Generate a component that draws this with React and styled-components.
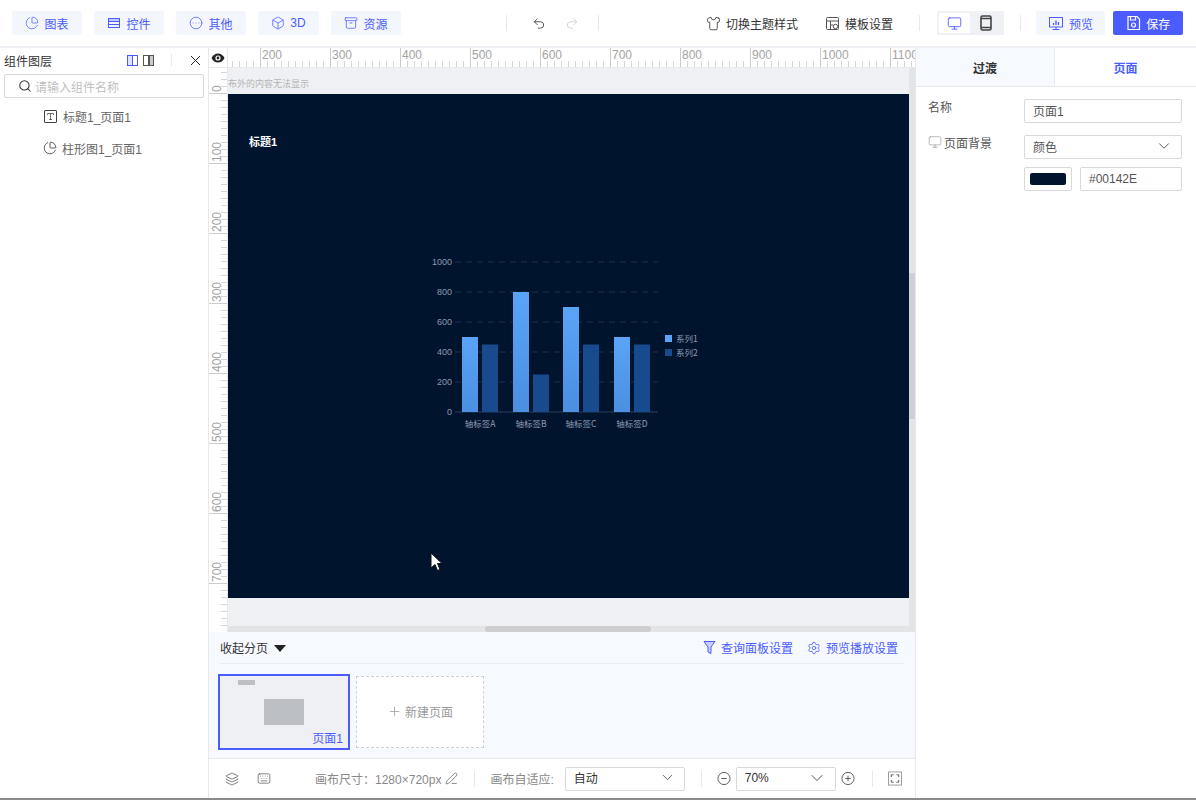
import React from 'react';
import styled, { createGlobalStyle } from 'styled-components';
import {
  PieChart, CircleEllipsis, Box, Archive, Undo2, Redo2, Shirt, Monitor,
  Search, X, Settings, ChevronDown, Plus, Layers, Keyboard, PenLine, Type,
} from 'lucide-react';

const BLUE = '#4b5cff';

const GlobalStyle = createGlobalStyle`
  html, body { margin: 0; padding: 0; background: #fff; }
  * { box-sizing: border-box; }
  body { font-family: "Liberation Sans", "Noto Sans CJK SC", sans-serif; font-size: 12px; color: #333; }
`;

const Page = styled.div`
  width: 1196px;
  height: 800px;
  display: flex;
  flex-direction: column;
  overflow: hidden;
  border-bottom: 2px solid #8a8a8a;
`;

const TopBar = styled.header`
  height: 48px;
  flex: none;
  display: flex;
  align-items: center;
  padding: 0 13px 0 12px;
  border-bottom: 2px solid #eceef1;
`;

const ToolGroup = styled.div`
  display: flex;
  gap: 12px;
`;

const ToolButton = styled.div`
  width: ${p => p.$w || 70}px;
  height: 24px;
  display: flex;
  align-items: center;
  justify-content: center;
  gap: 5px;
  background: #f4f6fe;
  color: ${BLUE};
  border-radius: 2px;
`;

const Sep = styled.i`
  width: 1px;
  height: ${p => p.$h || 16}px;
  background: #e6e8ec;
  flex: none;
  margin: ${p => p.$m || '0'};
`;

const PlainAction = styled.div`
  display: flex;
  align-items: center;
  gap: 5px;
  color: #333;
  white-space: nowrap;
  width: ${p => p.$w}px;
  flex: none;
`;

const DeviceToggle = styled.div`
  width: 67px;
  height: 24px;
  margin-left: 17px;
  display: flex;
  padding: 2px;
  background: #eff1f5;
`;

const DeviceItem = styled.div`
  flex: 1;
  display: flex;
  align-items: center;
  justify-content: center;
  background: ${p => (p.$active ? '#fff' : 'transparent')};
  color: ${p => (p.$active ? BLUE : '#444')};
`;

const SaveButton = styled(ToolButton)`
  background: ${BLUE};
  color: #fff;
  margin-left: 8px;
`;

const Main = styled.div`
  flex: 1;
  min-height: 0;
  display: flex;
`;

const LeftPanel = styled.aside`
  width: 208px;
  flex: none;
  padding: 0 4px;
`;

const LayerHead = styled.div`
  height: 26px;
  padding-bottom: 2px;
  display: flex;
  align-items: center;
  font-size: 12px;
  color: #333;
`;

const LayerTitle = styled.span`
  flex: 1;
`;

const DockIcon = styled.span`
  width: 11px;
  height: 11px;
  display: block;
  margin-right: 5px;
  border: 1.5px solid ${p => (p.$active ? BLUE : '#555')};
  background: ${p => (p.$active ? 'linear-gradient(90deg, #dfe2ff 40%, #4b5cff 40%, #4b5cff 58%, transparent 58%)' : 'linear-gradient(90deg, transparent 50%, #555 50%, #555 68%, #ccc 68%)')};
`;

const CloseWrap = styled.span`
  display: flex;
  margin: 0 0 0 15px;
  color: #222;
`;

const SearchBox = styled.div`
  height: 24px;
  display: flex;
  align-items: center;
  gap: 3px;
  padding-left: 13px;
  border: 1px solid #d9d9d9;
  border-radius: 2px;
  color: #bfbfbf;
  margin-bottom: 2px;
`;

const LayerRow = styled.div`
  height: 32px;
  display: flex;
  align-items: center;
  gap: 5px;
  padding-left: 39px;
  color: #666;
`;

const TypeBadge = styled.span`
  width: 13px;
  height: 13px;
  margin: 0 1px;
  border: 1px solid #444;
  border-radius: 1px;
  display: flex;
  align-items: center;
  justify-content: center;
  color: #444;
`;

const Center = styled.section`
  width: 707px;
  flex: none;
  display: flex;
  flex-direction: column;
  border-left: 1px solid #e6e8ec;
`;

const RulerTop = styled.div`
  height: 20px;
  flex: none;
  display: flex;
  overflow: hidden;
`;

const RulerCorner = styled.div`
  width: 19px;
  flex: none;
  display: flex;
  align-items: center;
  justify-content: center;
  border-right: 1px solid #e6e8ec;
  border-bottom: 1px solid #e6e8ec;
`;

const RulerH = styled.div`
  flex: 1;
  display: flex;
  overflow: hidden;
  padding-left: 32px;
  border-bottom: 1px solid #e6e8ec;
  background:
    repeating-linear-gradient(90deg, #d4d6da 0 1px, transparent 1px 7px) 4px 100% / 100% 6px no-repeat;
`;

const RulerHCell = styled.div`
  width: 70px;
  flex: none;
  height: 19px;
  border-left: 1px solid #ccc;
  padding-left: 1px;
  font-size: 12px;
  line-height: 14px;
  color: #a3a3a3;
  font-family: "Liberation Sans", sans-serif;
`;

const Workspace = styled.div`
  flex: 1;
  min-height: 0;
  display: flex;
`;

const RulerV = styled.div`
  width: 19px;
  flex: none;
  display: flex;
  flex-direction: column;
  overflow: hidden;
  padding-top: 25px;
  border-right: 1px solid #e6e8ec;
  background:
    repeating-linear-gradient(180deg, #d4d6da 0 1px, transparent 1px 7px) 100% 4px / 6px 100% no-repeat;
`;

const RulerVCell = styled.div`
  height: 70px;
  flex: none;
  width: 19px;
  border-top: 1px solid #ccc;
  position: relative;
`;

const RulerVLabel = styled.span`
  position: absolute;
  left: 1px;
  top: -2px;
  transform: rotate(-90deg);
  transform-origin: 0 0;
  font-size: 12px;
  line-height: 14px;
  color: #a3a3a3;
  white-space: nowrap;
`;

const StageColumn = styled.div`
  flex: 1;
  min-width: 0;
  min-height: 0;
  display: flex;
  flex-direction: column;
`;

const StageRow = styled.div`
  flex: 1;
  min-height: 0;
  display: flex;
`;

const Stage = styled.div`
  flex: 1;
  min-width: 0;
  background: #eef0f4;
  display: flex;
  flex-direction: column;
`;

const StageHint = styled.div`
  height: 26px;
  flex: none;
  font-size: 9px;
  line-height: 32px;
  color: #b4b4b4;
  white-space: nowrap;
  overflow: hidden;
`;

const Canvas = styled.div`
  height: 504px;
  flex: none;
  background: #00142e;
  position: relative;
  display: flex;
  align-items: flex-start;
  padding: 41px 21px 0;
`;

const CanvasTitle = styled.div`
  color: #fff;
  font-size: 11px;
  font-weight: 700;
  line-height: 14px;
`;

const ChartWrap = styled.div`
  position: absolute;
  left: 200px;
  top: 156px;
  width: 280px;
  height: 184px;
`;

const CursorWrap = styled.div`
  position: absolute;
  left: 202px;
  top: 458px;
  width: 14px;
  height: 20px;
`;

const ScrollV = styled.div`
  width: 6px;
  flex: none;
  background: #e3e4e6;
  display: flex;
  flex-direction: column;
  padding-top: 205px;
`;

const ScrollVThumb = styled.div`
  height: 146px;
  background: #cdd0d6;
`;

const ScrollH = styled.div`
  height: 6px;
  flex: none;
  background: #e3e4e6;
  padding-left: 257px;
`;

const ScrollHThumb = styled.div`
  width: 166px;
  height: 6px;
  background: #cdcdcf;
  border-radius: 3px;
`;

const Pager = styled.div`
  height: 127px;
  flex: none;
  background: #f6f9fe;
  padding: 0 11px;
  border-bottom: 1px solid #e6e8ec;
`;

const PagerHead = styled.div`
  height: 32px;
  display: flex;
  align-items: center;
  padding-right: 6px;
  border-bottom: 1px solid #e9edf3;
  margin-bottom: 10px;
`;

const Collapse = styled.div`
  flex: 1;
  display: flex;
  align-items: center;
  gap: 6px;
  color: #333;
`;

const Caret = styled.i`
  width: 0;
  height: 0;
  border-left: 6px solid transparent;
  border-right: 6px solid transparent;
  border-top: 7px solid #222;
  margin-top: 1px;
`;

const PagerLink = styled.div`
  display: flex;
  align-items: center;
  gap: 5px;
  color: ${BLUE};
  margin-left: 14px;
`;

const Thumbs = styled.div`
  display: flex;
  gap: 6px;
  margin-left: -2px;
`;

const ThumbCard = styled.div`
  width: 132px;
  height: 76px;
  border: 2px solid ${BLUE};
  background: #eef0f4;
  position: relative;
`;

const ThumbMini = styled.i`
  position: absolute;
  left: ${p => p.$x}px;
  top: ${p => p.$y}px;
  width: ${p => p.$w}px;
  height: ${p => p.$h}px;
  background: #bcbfc3;
`;

const ThumbName = styled.span`
  position: absolute;
  right: 5px;
  bottom: 1px;
  color: ${BLUE};
  line-height: 16px;
`;

const NewPage = styled.div`
  width: 128px;
  height: 72px;
  margin-top: 2px;
  padding-bottom: 2px;
  border: 1px dashed #d0d2d6;
  background: #fff;
  display: flex;
  align-items: center;
  justify-content: center;
  gap: 3px;
  color: #999;
`;

const BottomBar = styled.div`
  height: 39px;
  flex: none;
  display: flex;
  align-items: center;
  padding-left: 16px;
  color: #888;
  white-space: nowrap;
`;

const BarIcon = styled.span`
  display: flex;
  width: 14px;
  margin-right: ${p => p.$mr || 0}px;
  margin-left: ${p => p.$ml || 0}px;
  color: ${p => p.$c || '#555'};
`;

const FieldBox = styled.div`
  width: ${p => p.$w || 158}px;
  height: 24px;
  flex: none;
  display: flex;
  align-items: center;
  justify-content: space-between;
  padding: 0 8px 1px;
  margin-left: ${p => p.$ml || 0}px;
  background: #fff;
  border: 1px solid #d9d9d9;
  border-radius: 2px;
  color: ${p => p.$c || '#555'};
`;

const ChevronField = styled(FieldBox)`
  padding-bottom: 2px;
`;

const RightPanel = styled.aside`
  flex: 1;
  min-width: 0;
  border-left: 1px solid #e6e8ec;
`;

const Tabs = styled.div`
  height: 39px;
  display: flex;
  border-bottom: 1px solid #e6e8ec;
`;

const Tab = styled.div`
  width: ${p => p.$w}px;
  display: flex;
  align-items: center;
  justify-content: center;
  font-weight: 700;
  background: ${p => (p.$active ? '#fff' : '#f6f9fe')};
  color: ${p => (p.$active ? BLUE : '#333')};
  border-right: ${p => (p.$active ? 'none' : '1px solid #e6e8ec')};
`;

const Form = styled.div`
  padding: 12px 14px 0 12px;
  display: flex;
  flex-direction: column;
  gap: 12px;
`;

const FormRow = styled.div`
  display: flex;
  align-items: flex-start;
`;

const SwatchRow = styled(FormRow)`
  margin-top: -4px;
  padding-left: 96px;
`;

const FormLabel = styled.div`
  width: 96px;
  flex: none;
  height: 14px;
  display: flex;
  align-items: center;
  gap: 2px;
  color: #555;
`;

const Swatch = styled.div`
  width: 48px;
  height: 24px;
  padding: 5px;
  background: #fff;
  border: 1px solid #d9d9d9;
  border-radius: 2px;
  margin-right: 8px;
  &::after {
    content: "";
    display: block;
    height: 100%;
    background: #00142e;
    border-radius: 2px;
  }
`;

const ControlIcon = () => (
  <svg width="14" height="14" viewBox="0 0 14 14" fill="none" stroke="currentColor">
    <rect x="1.5" y="2.5" width="11" height="9" />
    <rect x="1.5" y="2.5" width="11" height="3" fill="currentColor" fillOpacity=".3" />
    <path d="M1.5 8.5h11" />
  </svg>
);

const TemplateIcon = () => (
  <svg width="15" height="15" viewBox="0 0 15 15" fill="none" stroke="#555">
    <rect x="1.5" y="1.5" width="12" height="12" rx="1" />
    <path d="M1.5 5h12M5.5 5v8.500M5.500 9h3" />
    <circle cx="10.500" cy="10.500" r="2.200" fill="#fff" />
  </svg>
);

const PhoneIcon = () => (
  <svg width="14" height="16" viewBox="0 0 14 16" fill="none" stroke="#444" strokeWidth="1.6">
    <rect x="2" y="1" width="10" height="14" rx="1.500" />
    <path d="M2 3.500h10M2 12.500h10" />
  </svg>
);

const PreviewIcon = () => (
  <svg width="16" height="15" viewBox="0 0 16 15" fill="none" stroke="currentColor">
    <rect x="1.500" y="1.500" width="13" height="9.500" />
    <path d="M8 11v2.500M4.500 13.500h7" />
    <path d="M5.500 9V7M8 9V4.500M10.500 9V6" strokeWidth="1.300" />
  </svg>
);

const SaveIcon = () => (
  <svg width="15" height="16" viewBox="0 0 15 16" fill="none" stroke="#fff" strokeWidth="1.200">
    <path d="M2 1.500h9l2.500 2.500v10.500H2z" />
    <path d="M4.500 1.500v3.500h5V1.500" />
    <circle cx="7.500" cy="10" r="2" />
  </svg>
);

const EyeIcon = () => (
  <svg width="14" height="10" viewBox="0 0 14 10">
    <path d="M0.500 5C2 2 4.300 0.500 7 0.500S12 2 13.500 5C12 8 9.700 9.500 7 9.500S2 8 0.500 5z" fill="#222" />
    <circle cx="7" cy="5" r="2.600" fill="#fff" />
    <circle cx="7" cy="5" r="1.400" fill="#222" />
  </svg>
);

const FunnelIcon = () => (
  <svg width="13" height="15" viewBox="0 0 13 15" fill="none" stroke={BLUE}>
    <path d="M1 1.500h11L8 7v6.500L5 12V7z" fill={BLUE} fillOpacity=".25" />
  </svg>
);

const FitIcon = () => (
  <svg width="15" height="15" viewBox="0 0 15 15" fill="none" stroke="#555">
    <rect x="0.500" y="0.500" width="14" height="14" stroke="#999" />
    <path d="M3.500 6V3.500H6M9 3.500h2.500V6M11.500 9v2.500H9M6 11.500H3.500V9" />
  </svg>
);

const ZoomIcon = ({ plus }) => (
  <svg width="15" height="15" viewBox="0 0 15 15" fill="none" stroke="#555">
    <circle cx="7.500" cy="7.500" r="6.500" />
    <path d={plus ? 'M4.500 7.500h6M7.500 4.500v6' : 'M4.500 7.500h6'} />
  </svg>
);

const TOOLS = [
  { name: '图表', icon: <PieChart size={14} strokeWidth={1.3} /> },
  { name: '控件', icon: <ControlIcon /> },
  { name: '其他', icon: <CircleEllipsis size={14} strokeWidth={1.3} /> },
  { name: '3D', icon: <Box size={14} strokeWidth={1.3} />, w: 61 },
  { name: '资源', icon: <Archive size={14} strokeWidth={1.3} /> },
];

const TICKS_H = [200, 300, 400, 500, 600, 700, 800, 900, 1000, 1100];
const TICKS_V = [0, 100, 200, 300, 400, 500, 600, 700];

const BARS = [
  [500, 450],
  [800, 250],
  [700, 450],
  [500, 450],
];
const AXIS = ['轴标签A', '轴标签B', '轴标签C', '轴标签D'];

// chart coordinates: y 0 at 162, 1000 at 12
const yOf = v => 162 - v * 0.15;

const BarChart = () => (
  <svg width="280" height="184" viewBox="0 0 280 184">
    <defs>
      <linearGradient id="s1" x1="0" y1="0" x2="0" y2="1">
        <stop offset="0" stopColor="#5aa4f7" />
        <stop offset="1" stopColor="#4a8fe0" />
      </linearGradient>
    </defs>
    {[1000, 800, 600, 400, 200].map(v => (
      <line key={v} x1="27" x2="230" y1={yOf(v)} y2={yOf(v)} stroke="#1f3049" strokeDasharray="6 5" />
    ))}
    <line x1="27" x2="230" y1="162" y2="162" stroke="#2a3f5e" />
    {[0, 200, 400, 600, 800, 1000].map(v => (
      <text key={v} x="24" y={yOf(v) + 3} textAnchor="end" fontSize="9" fill="#8d9bb0" fontFamily="Liberation Sans">{v}</text>
    ))}
    {BARS.map(([a, b], i) => {
      const x = 34 + [0, 51, 101, 152][i];
      return (
        <g key={i}>
          <rect x={x} y={yOf(a)} width="16" height={162 - yOf(a)} fill="url(#s1)" />
          <rect x={x + 20} y={yOf(b)} width="16" height={162 - yOf(b)} fill="#184a8e" />
          <text x={x + 18} y="177" textAnchor="middle" fontSize="8.5" fill="#8d9bb0" fontFamily="Noto Sans CJK SC">{AXIS[i]}</text>
        </g>
      );
    })}
    <rect x="237" y="85" width="7" height="7" fill="#5aa4f7" />
    <text x="248" y="92" fontSize="8.5" fill="#8d9bb0" fontFamily="Noto Sans CJK SC">系列1</text>
    <rect x="237" y="99" width="7" height="7" fill="#184a8e" />
    <text x="248" y="106" fontSize="8.5" fill="#8d9bb0" fontFamily="Noto Sans CJK SC">系列2</text>
  </svg>
);

const App = () => (
  <Page>
    <GlobalStyle />
    <TopBar>
      <ToolGroup>
        {TOOLS.map(({ name, icon, w }) => (
          <ToolButton key={name} $w={w}>
            {icon}
            {name}
          </ToolButton>
        ))}
      </ToolGroup>
      <Sep $m="0 25px 0 105px" />
      <BarIcon $mr={19} $c="#333"><Undo2 size={15} strokeWidth={1.4} /></BarIcon>
      <BarIcon $c="#ccc"><Redo2 size={15} strokeWidth={1.4} /></BarIcon>
      <Sep $m="0 107px 0 19px" />
      <PlainAction $w={119}><Shirt size={15} strokeWidth={1.3} />切换主题样式</PlainAction>
      <PlainAction $w={94}><TemplateIcon />模板设置</PlainAction>
      <Sep />
      <DeviceToggle>
        <DeviceItem $active><Monitor size={15} strokeWidth={1.4} /></DeviceItem>
        <DeviceItem><PhoneIcon /></DeviceItem>
      </DeviceToggle>
      <Sep $m="0 15px 0 16px" />
      <ToolButton><PreviewIcon />预览</ToolButton>
      <SaveButton><SaveIcon />保存</SaveButton>
    </TopBar>
    <Main>
      <LeftPanel>
        <LayerHead>
          <LayerTitle>组件图层</LayerTitle>
          <DockIcon $active />
          <DockIcon />
          <Sep $h={12} $m="0 0 0 12px" />
          <CloseWrap><X size={17} strokeWidth={1.4} /></CloseWrap>
        </LayerHead>
        <SearchBox>
          <Search size={14} color="#333" strokeWidth={1.8} />
          请输入组件名称
        </SearchBox>
        <LayerRow>
          <TypeBadge><Type size={9} strokeWidth={2} /></TypeBadge>
          标题1_页面1
        </LayerRow>
        <LayerRow>
          <PieChart size={14} color="#444" strokeWidth={1.5} />
          柱形图1_页面1
        </LayerRow>
      </LeftPanel>
      <Center>
        <RulerTop>
          <RulerCorner><EyeIcon /></RulerCorner>
          <RulerH>
            {TICKS_H.map(t => <RulerHCell key={t}>{t}</RulerHCell>)}
          </RulerH>
        </RulerTop>
        <Workspace>
          <RulerV>
            {TICKS_V.map(t => (
              <RulerVCell key={t}><RulerVLabel>{t}</RulerVLabel></RulerVCell>
            ))}
          </RulerV>
          <StageColumn>
            <StageRow>
              <Stage>
                <StageHint>布外的内容无法显示</StageHint>
                <Canvas>
                  <CanvasTitle>标题1</CanvasTitle>
                  <ChartWrap><BarChart /></ChartWrap>
                  <CursorWrap>
                    <svg width="14" height="20" viewBox="0 0 14 20">
                      <path d="M1 1v15l4-3.500 2.500 6 2.500-1-2.500-6H12z" fill="#fff" stroke="#111" strokeWidth="1" />
                    </svg>
                  </CursorWrap>
                </Canvas>
              </Stage>
              <ScrollV><ScrollVThumb /></ScrollV>
            </StageRow>
            <ScrollH><ScrollHThumb /></ScrollH>
          </StageColumn>
        </Workspace>
        <Pager>
          <PagerHead>
            <Collapse>收起分页<Caret /></Collapse>
            <PagerLink><FunnelIcon />查询面板设置</PagerLink>
            <PagerLink><Settings size={14} strokeWidth={1.4} />预览播放设置</PagerLink>
          </PagerHead>
          <Thumbs>
            <ThumbCard>
              <ThumbMini $x={18} $y={4} $w={17} $h={5} />
              <ThumbMini $x={44} $y={23} $w={40} $h={26} />
              <ThumbName>页面1</ThumbName>
            </ThumbCard>
            <NewPage><Plus size={15} strokeWidth={1.2} />新建页面</NewPage>
          </Thumbs>
        </Pager>
        <BottomBar>
          <BarIcon $mr={18}><Layers size={14} strokeWidth={1.3} /></BarIcon>
          <BarIcon $mr={44}><Keyboard size={15} strokeWidth={1.2} /></BarIcon>
          画布尺寸：1280×720px
          <BarIcon $ml={4}><PenLine size={13} strokeWidth={1.3} /></BarIcon>
          <Sep $m="0 15px 0 15px" />
          画布自适应:
          <ChevronField $w={120} $c="#333" $ml={11}>
            自动<ChevronDown size={17} strokeWidth={1.3} color="#555" />
          </ChevronField>
          <Sep $m="0 15px 0 16px" />
          <BarIcon $mr={5}><ZoomIcon /></BarIcon>
          <ChevronField $w={100} $c="#333">
            70%<ChevronDown size={20} strokeWidth={1.2} color="#555" />
          </ChevronField>
          <BarIcon $ml={5}><ZoomIcon plus /></BarIcon>
          <Sep $m="0 15px 0 17px" />
          <BarIcon><FitIcon /></BarIcon>
        </BottomBar>
      </Center>
      <RightPanel>
        <Tabs>
          <Tab $w={139}>过渡</Tab>
          <Tab $w={141} $active>页面</Tab>
        </Tabs>
        <Form>
          <FormRow>
            <FormLabel>名称</FormLabel>
            <FieldBox>页面1</FieldBox>
          </FormRow>
          <FormRow>
            <FormLabel><Monitor size={14} strokeWidth={1} color="#888" />页面背景</FormLabel>
            <ChevronField>颜色<ChevronDown size={18} strokeWidth={1.3} /></ChevronField>
          </FormRow>
          <SwatchRow>
            <Swatch />
            <FieldBox $w={102}>#00142E</FieldBox>
          </SwatchRow>
        </Form>
      </RightPanel>
    </Main>
  </Page>
);

export default App;
